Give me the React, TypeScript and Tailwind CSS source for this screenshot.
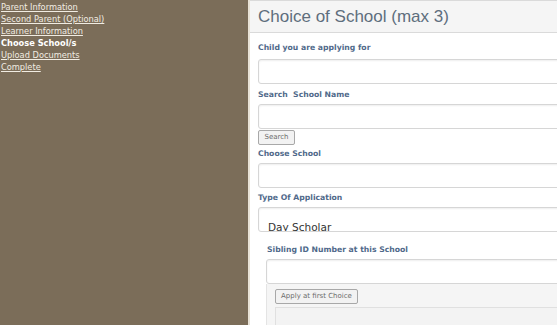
const links = [
  { label: 'Parent Information', current: false },
  { label: 'Second Parent (Optional)', current: false },
  { label: 'Learner Information', current: false },
  { label: 'Choose School/s', current: true },
  { label: 'Upload Documents', current: false },
  { label: 'Complete', current: false },
]

const verdana = "font-['DejaVu_Sans',Verdana,sans-serif]"

function Label({ children, className = '' }: { children: string; className?: string }) {
  return (
    <div className={`${verdana} text-[7.7px] font-bold leading-[10px] h-[10px] text-[#50698a] whitespace-pre ${className}`}>
      {children}
    </div>
  )
}

function Field({ className = '', children }: { className?: string; children?: React.ReactNode }) {
  return (
    <div
      className={`h-[25px] w-[340px] border border-[#d6d6d6] rounded-[3px] bg-white shadow-[inset_0_1px_2px_rgba(0,0,0,0.07)] overflow-hidden ${className}`}
    >
      {children}
    </div>
  )
}

function Button({ children, className = '' }: { children: string; className?: string }) {
  return (
    <div
      className={`${verdana} h-[15px] flex items-center justify-center border border-[#a8a8a8] rounded-[2px] bg-[#f2f2f2] text-[7px] text-[#6b6b6b] whitespace-nowrap ${className}`}
    >
      {children}
    </div>
  )
}

export default function App() {
  return (
    <div className="w-[557px] h-[325px] flex overflow-hidden bg-white">
      <nav className={`w-[248px] shrink-0 bg-[#7b6d59] pt-[1px] pl-[1px] ${verdana} text-[8.25px] leading-[12px]`}>
        {links.map((l) => (
          <div key={l.label}>
            {l.current ? (
              <span className="font-bold text-white">{l.label}</span>
            ) : (
              <a className="text-[#f1ece2] underline">{l.label}</a>
            )}
          </div>
        ))}
      </nav>

      <main className="flex-1 min-w-0 border-l-2 border-[#e8e2d6] overflow-hidden">
        <header className="h-[33px] flex items-center pl-[8px] bg-[#f5f5f5] border-t border-b border-[#dadada]">
          <h1 className="font-['Liberation_Sans',Arial,sans-serif] text-[17px] text-[#5e6e7d] whitespace-nowrap">
            Choice of School (max 3)
          </h1>
        </header>

        <div className="pl-[8px]">
          <Label className="mt-[10px]">Child you are applying for</Label>
          <Field className="mt-[6px]" />

          <Label className="mt-[6px]">Search  School Name</Label>
          <Field className="mt-[4px]" />
          <Button className="mt-[1px] w-[37px]">Search</Button>

          <Label className="mt-[4px]">Choose School</Label>
          <Field className="mt-[4px]" />

          <Label className="mt-[5px]">Type Of Application</Label>
          <Field className="mt-[4px]">
            <div className={`${verdana} pl-[9px] pt-[13px] text-[10.5px] leading-[13px] text-[#333]`}>Day Scholar</div>
          </Field>

          <div className="pl-[8px]">
            <Label className="mt-[13px] pl-[1px]">Sibling ID Number at this School</Label>
            <Field className="mt-[4px]" />
            <div className="h-[60px] bg-[#f5f5f5] border-l border-[#e4e4e4] pl-[8px] pt-[5px]">
              <Button className="w-[83px]">Apply at first Choice</Button>
              <div className="mt-[3px] h-[40px] bg-[#f3f3f3] border-t border-l border-[#e0e0e0]" />
            </div>
          </div>
        </div>
      </main>
    </div>
  )
}
